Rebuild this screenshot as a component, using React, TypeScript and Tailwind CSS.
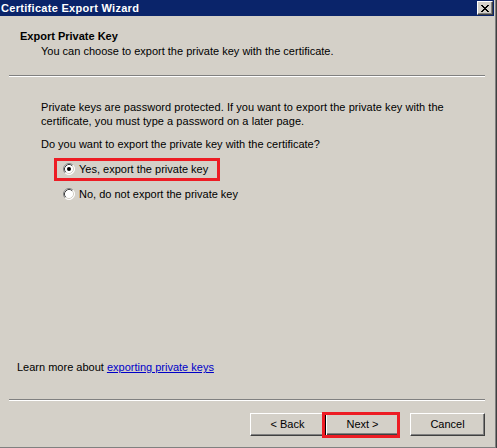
import React from "react";

const FONT = { fontFamily: '"Liberation Sans", Arial, sans-serif' };

function Radio({ checked }: { checked: boolean }) {
  return (
    <svg width="12" height="12" viewBox="0 0 12 12" className="shrink-0">
      <circle cx="6" cy="6" r="5.5" fill="#ffffff" />
      <path d="M2.11 9.89 A5.5 5.5 0 0 1 9.89 2.11" fill="none" stroke="#808080" strokeWidth="1" />
      <path d="M9.89 2.11 A5.5 5.5 0 0 1 2.11 9.89" fill="none" stroke="#ffffff" strokeWidth="1" />
      <path d="M2.82 9.18 A4.5 4.5 0 0 1 9.18 2.82" fill="none" stroke="#404040" strokeWidth="1" />
      <path d="M9.18 2.82 A4.5 4.5 0 0 1 2.82 9.18" fill="none" stroke="#d4d0c8" strokeWidth="1" />
      {checked && <circle cx="6" cy="6" r="2" fill="#000000" />}
    </svg>
  );
}

function Separator() {
  return (
    <div className="ml-[9px] w-[476px] flex flex-col">
      <div className="h-px bg-[#808080]" />
      <div className="h-px bg-white" />
    </div>
  );
}

function Btn({ label, isDefault }: { label: string; isDefault?: boolean }) {
  return (
    <div
      className={
        "w-[75px] h-[23px] bg-[#d4d0c8] flex items-center justify-center text-[11px] text-black " +
        (isDefault
          ? "border border-black shadow-[inset_1px_1px_#ffffff,inset_-1px_-1px_#404040,inset_-2px_-2px_#808080]"
          : "border-t border-l border-t-white border-l-white border-b border-r border-b-[#404040] border-r-[#404040] shadow-[inset_-1px_-1px_#808080]")
      }
    >
      {label}
    </div>
  );
}

export default function App() {
  const xRows = [
    "11....11",
    ".11..11.",
    "..1111..",
    "...11...",
    "..1111..",
    ".11..11.",
    "11....11",
  ];
  return (
    <div className="w-[497px] h-[448px] bg-[#d4d0c8] border-r border-r-[#404040] overflow-hidden" style={FONT}>
      <div className="w-[496px] h-[448px] border-r border-r-[#808080] border-b border-b-[#808080] flex flex-col">
        {/* Title bar */}
        <div className="h-[16px] mr-[1px] bg-[#0a246a] flex items-center justify-between relative">
          <span className="text-white font-bold text-[11px] leading-[14px] pl-[1px] tracking-[0.3px]">Certificate Export Wizard</span>
          <div className="w-[16px] h-[14px] bg-[#d4d0c8] border-t border-l border-t-white border-l-white border-b border-r border-b-[#404040] border-r-[#404040] shadow-[inset_-1px_-1px_#808080] flex items-center justify-center mr-[1px] mt-[1px] self-start">
            <svg width="8" height="7" viewBox="0 0 8 7" shapeRendering="crispEdges" className="mr-px">
              {xRows.flatMap((row, y) =>
                row.split("").map((c, x) =>
                  c === "1" ? <rect key={`${x}-${y}`} x={x} y={y} width="1" height="1" fill="#000" /> : null
                )
              )}
            </svg>
          </div>
        </div>

        {/* Header */}
        <div className="pt-[13px] text-[11px] leading-[14px] text-black">
          <div className="pl-[20px] font-bold">Export Private Key</div>
          <div className="pl-[41px] mt-px">You can choose to export the private key with the certificate.</div>
        </div>

        <div className="mt-[17px]">
          <Separator />
        </div>

        {/* Body */}
        <div className="flex-1 flex flex-col text-[11px] leading-[14px] text-black">
          <div className="pl-[41px] pt-[23px] pr-[20px] tracking-[0.05px]">
            Private keys are password protected. If you want to export the private key with the
            <br />
            certificate, you must type a password on a later page.
          </div>
          <div className="pl-[41px] mt-[9px]">Do you want to export the private key with the certificate?</div>

          <div className="pl-[63px] mt-[11px] flex flex-col gap-[11px]">
            <div className="relative h-[14px] flex items-center gap-[4px]">
              <Radio checked />
              <span>Yes, export the private key</span>
              <div className="absolute left-[-9px] top-[-4px] w-[166px] h-[23px] border-[3px] border-[#ed1c24]" />
            </div>
            <div className="h-[14px] flex items-center gap-[4px]">
              <Radio checked={false} />
              <span>No, do not export the private key</span>
            </div>
          </div>

          <div className="flex-1" />

          <div className="pl-[17px] mb-[25px]">
            Learn more about{" "}
            <span className="text-[#0000c8] underline">exporting private keys</span>
          </div>
        </div>

        <Separator />

        {/* Buttons */}
        <div className="mt-[12px] mb-[11px] flex pl-[250px]">
          <Btn label="< Back" />
          <div className="relative">
            <Btn label="Next >" isDefault />
            <div className="absolute left-[-3px] top-[-1px] w-[78px] h-[26px] border-[3px] border-[#ed1c24]" />
          </div>
          <div className="ml-[10px]">
            <Btn label="Cancel" />
          </div>
        </div>
      </div>
    </div>
  );
}
